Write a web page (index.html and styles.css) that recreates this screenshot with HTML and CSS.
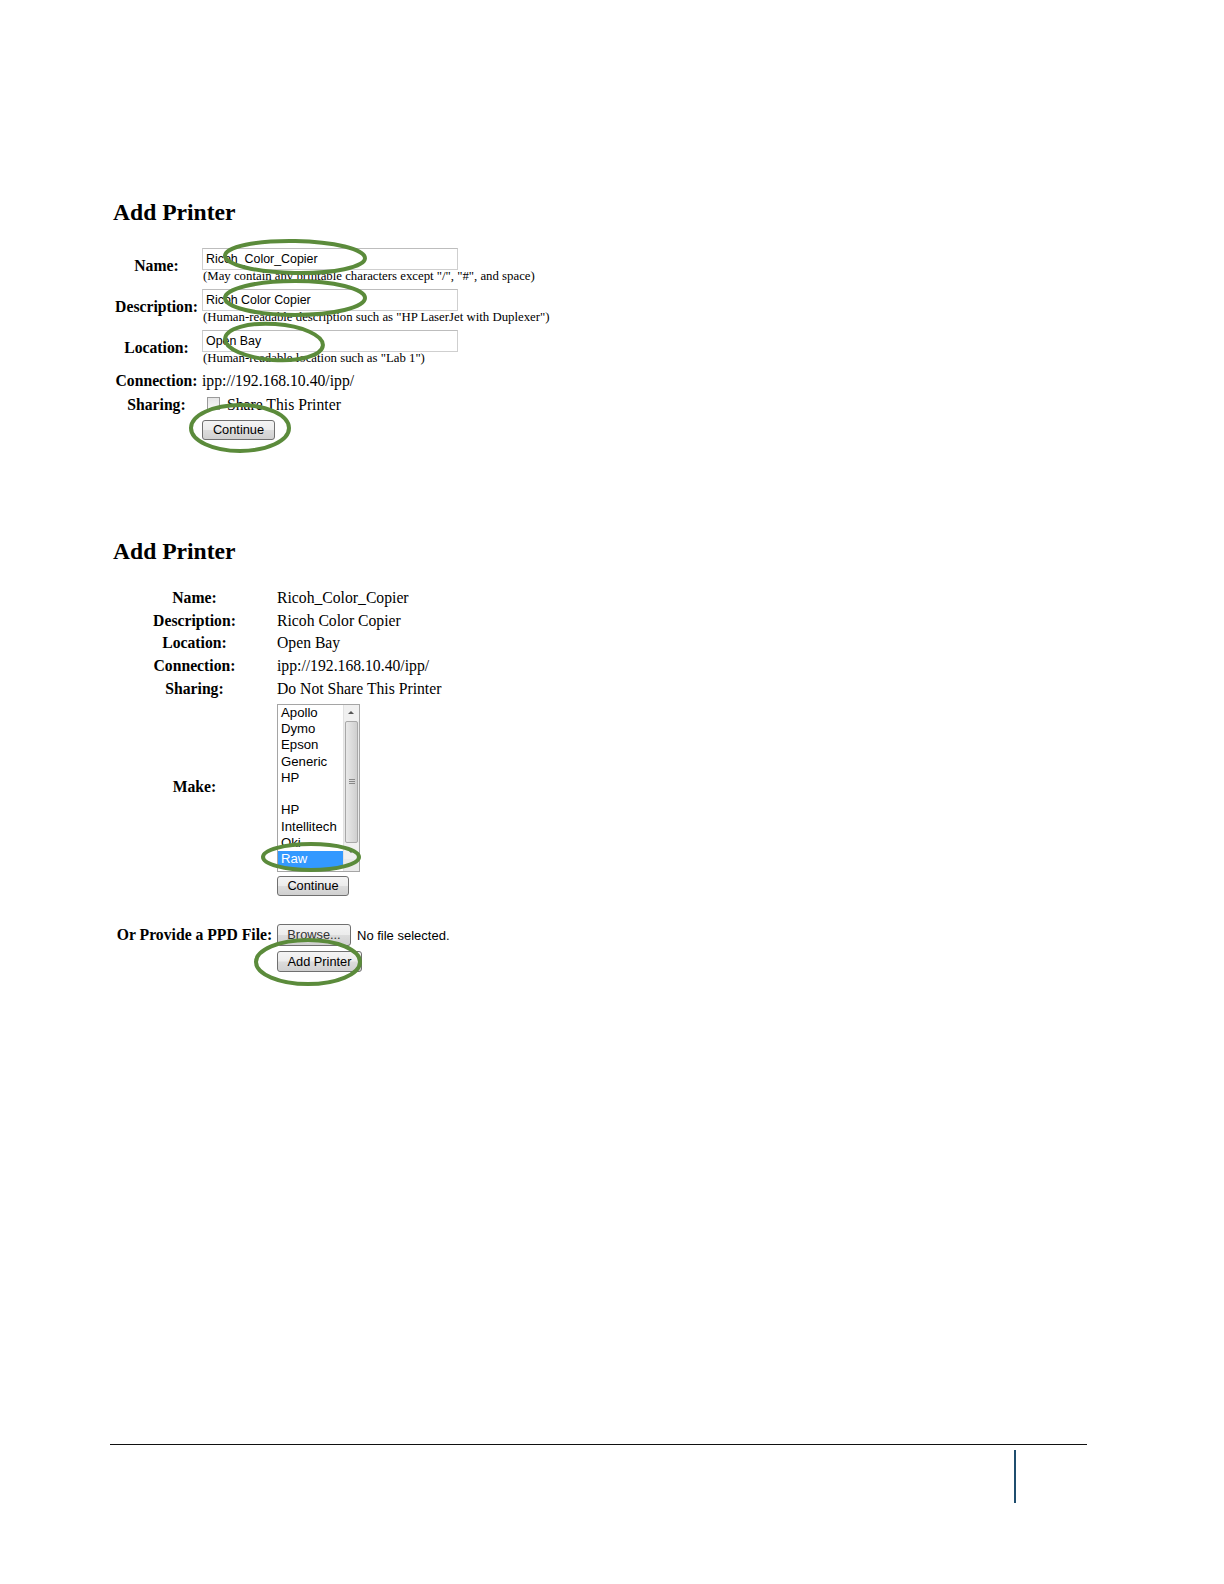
FILE: index.html
```html
<!DOCTYPE html>
<html>
<head>
<meta charset="utf-8">
<title>Add Printer</title>
<link rel="stylesheet" href="styles.css">
</head>
<body>
<div class="page">
  <section class="shot shot-one">
    <h2 class="title">Add Printer</h2>
    <div class="form-one">
      <div class="label">Name:</div>
      <div class="field">
        <div class="input">Ricoh_Color_Copier</div>
        <div class="hint">(May contain any printable characters except "/", "#", and space)</div>
      </div>
      <div class="label">Description:</div>
      <div class="field">
        <div class="input">Ricoh Color Copier</div>
        <div class="hint">(Human-readable description such as "HP LaserJet with Duplexer")</div>
      </div>
      <div class="label">Location:</div>
      <div class="field">
        <div class="input">Open Bay</div>
        <div class="hint">(Human-readable location such as "Lab 1")</div>
      </div>
      <div class="label">Connection:</div>
      <div class="value">ipp://192.168.10.40/ipp/</div>
      <div class="label">Sharing:</div>
      <div class="value share"><span class="checkbox"></span>Share This Printer</div>
      <div></div>
      <div class="btn-cell"><span class="button">Continue</span></div>
    </div>
  </section>

  <section class="shot shot-two">
    <h2 class="title">Add Printer</h2>
    <div class="form-two">
      <div class="label2">Name:</div>
      <div class="value2">Ricoh_Color_Copier</div>
      <div class="label2">Description:</div>
      <div class="value2">Ricoh Color Copier</div>
      <div class="label2">Location:</div>
      <div class="value2">Open Bay</div>
      <div class="label2">Connection:</div>
      <div class="value2">ipp://192.168.10.40/ipp/</div>
      <div class="label2">Sharing:</div>
      <div class="value2">Do Not Share This Printer</div>
      <div class="label2 make-label">Make:</div>
      <div class="make-cell">
        <div class="listbox">
          <div class="options">
            <div class="opt">Apollo</div>
            <div class="opt">Dymo</div>
            <div class="opt">Epson</div>
            <div class="opt">Generic</div>
            <div class="opt">HP</div>
            <div class="opt">&nbsp;</div>
            <div class="opt">HP</div>
            <div class="opt">Intellitech</div>
            <div class="opt">Oki</div>
            <div class="opt selected">Raw</div>
          </div>
          <div class="scrollbar">
            <div class="arrow up"></div>
            <div class="thumb"><span class="grip"></span></div>
            <div class="arrow down"></div>
          </div>
        </div>
      </div>
      <div></div>
      <div class="cont-cell"><span class="button btn2">Continue</span></div>
      <div class="label2 ppd-label">Or Provide a PPD File:</div>
      <div class="file-row"><span class="button browse">Browse...</span><span class="nofile">No file selected.</span></div>
      <div></div>
      <div class="add-cell"><span class="button addp">Add Printer</span></div>
    </div>
  </section>

  <footer class="footer">
    <div class="rule"></div>
    <div class="bar"></div>
  </footer>

  <svg class="marks" width="1224" height="1584" viewBox="0 0 1224 1584" aria-hidden="true">
    <g fill="none" stroke="#5b8b3b" stroke-width="4">
      <ellipse cx="295" cy="257" rx="70" ry="16" transform="rotate(1 295 257)"/>
      <ellipse cx="295" cy="298" rx="70" ry="17"/>
      <ellipse cx="274" cy="342" rx="49" ry="18" transform="rotate(4 274 342)"/>
      <ellipse cx="240" cy="428" rx="49" ry="23"/>
      <ellipse cx="311" cy="857" rx="48" ry="13"/>
      <ellipse cx="308" cy="962" rx="52" ry="22"/>
    </g>
  </svg>
</div>
</body>
</html>
```

FILE: styles.css
```css
* { box-sizing: border-box; }

html, body {
  margin: 0;
  padding: 0;
  background: #ffffff;
  overflow: hidden;
}

.page {
  position: relative;
  width: 100%;
  height: 1584px;
  overflow: hidden;
  display: flex;
  flex-direction: column;
  font-family: "Liberation Serif", "Times New Roman", serif;
  color: #000;
}

.shot {
  padding-left: 113px;
}

.title {
  margin: 0;
  font-size: 23.6px;
  line-height: 26px;
  font-weight: bold;
}

.shot-one .title { margin-top: 199px; }
.shot-two .title { margin-top: 98px; }

/* ---- first form ---- */
.form-one {
  margin-top: 23px;
  display: grid;
  grid-template-columns: 87px auto;
  column-gap: 2px;
  row-gap: 6.2px;
  align-items: center;
  justify-content: start;
}

.label {
  text-align: center;
  font-weight: bold;
  font-size: 15.7px;
  line-height: 18px;
  white-space: nowrap;
}

.field {
  display: flex;
  flex-direction: column;
}

.input {
  width: 256px;
  height: 22px;
  border: 1px solid #cfcfcf;
  border-top-color: #bdbdbd;
  padding: 0 3px;
  font-family: "Liberation Sans", Arial, sans-serif;
  font-size: 12.4px;
  line-height: 20px;
  white-space: nowrap;
}

.hint {
  font-size: 12.8px;
  line-height: 13px;
  margin-left: 1px;
  white-space: nowrap;
}

.value {
  font-size: 15.7px;
  line-height: 18px;
  white-space: nowrap;
}

.share {
  display: flex;
  align-items: center;
  line-height: 16px;
}

.checkbox {
  display: inline-block;
  width: 13px;
  height: 13px;
  margin-left: 5px;
  margin-right: 7px;
  margin-top: -2px;
  border: 1px solid #9a9a9a;
  background: linear-gradient(#e6e6e6, #f7f7f7);
}

.btn-cell { padding-top: 0; }

.button {
  display: inline-block;
  height: 20px;
  padding: 0 10px;
  border: 1px solid #707070;
  border-radius: 3px;
  background: linear-gradient(#f4f4f4 0%, #ececec 48%, #dcdcdc 52%, #d0d0d0 100%);
  font-family: "Liberation Sans", Arial, sans-serif;
  font-size: 12.8px;
  line-height: 18px;
  color: #000;
  white-space: nowrap;
  text-align: center;
}

.btn-cell .button { width: 73px; padding: 0; }

/* ---- second form ---- */
.form-two {
  margin-top: 23px;
  display: grid;
  grid-template-columns: 160px auto;
  column-gap: 4px;
  align-items: center;
  justify-content: start;
}

.label2 {
  text-align: center;
  padding-left: 3px;
  font-weight: bold;
  font-size: 15.7px;
  line-height: 22.75px;
  white-space: nowrap;
}

.value2 {
  font-size: 15.7px;
  line-height: 22.75px;
  white-space: nowrap;
}

.make-cell { padding-top: 3px; }
.make-label { padding-top: 3px; }

.listbox {
  width: 83px;
  height: 168px;
  border: 1px solid #a5a5a5;
  display: flex;
  overflow: hidden;
  background: #fff;
}

.options {
  flex: 1;
  font-family: "Liberation Sans", Arial, sans-serif;
  font-size: 13.2px;
}

.opt {
  height: 16.3px;
  line-height: 16.3px;
  padding-left: 3px;
  white-space: nowrap;
  color: #000;
}

.opt.selected {
  background: #3399ff;
  color: #fff;
}

.scrollbar {
  width: 16px;
  display: flex;
  flex-direction: column;
  background: #eaeaea;
  border-left: 1px solid #e2e2e2;
}

.arrow {
  height: 16px;
  position: relative;
  background: #f0f0f0;
}

.arrow::after {
  content: "";
  position: absolute;
  left: 4px;
  top: 6px;
  border-left: 3px solid transparent;
  border-right: 3px solid transparent;
}

.arrow.up::after { border-bottom: 3px solid #555; }
.arrow.down::after { border-top: 3px solid #555; top: 7px; }

.thumb {
  height: 122px;
  margin: 0 1px;
  border: 1px solid #a8a8a8;
  border-radius: 2px;
  background: linear-gradient(90deg, #e9e9e9, #dcdcdc 50%, #cfcfcf);
  display: flex;
  align-items: center;
  justify-content: center;
}

.grip {
  width: 6px;
  height: 5px;
  border-top: 1px solid #888;
  border-bottom: 1px solid #888;
  position: relative;
}

.grip::after {
  content: "";
  position: absolute;
  left: 0;
  right: 0;
  top: 1px;
  border-top: 1px solid #888;
}

.cont-cell { padding-top: 4px; }

.btn2 {
  width: 72px;
  padding: 0;
}

.ppd-label { margin-top: 28px; }

.file-row {
  margin-top: 28px;
  display: flex;
  align-items: center;
}

.browse {
  width: 74px;
  height: 22px;
  line-height: 20px;
  padding: 0;
  color: #333;
}

.nofile {
  margin-left: 6px;
  font-family: "Liberation Sans", Arial, sans-serif;
  font-size: 13px;
}

.add-cell { padding-top: 5px; }

.addp {
  width: 85px;
  height: 21px;
  line-height: 19px;
  padding: 0;
}

/* ---- footer ---- */
.footer {
  margin-top: auto;
  padding-left: 110px;
  padding-bottom: 81px;
}

.rule {
  width: 977px;
  height: 1.5px;
  background: #111;
}

.bar {
  width: 2px;
  height: 53px;
  margin-top: 5px;
  margin-left: 904px;
  background: #1f4e6e;
}

.marks {
  position: absolute;
  left: 0;
  top: 0;
  pointer-events: none;
}
```
